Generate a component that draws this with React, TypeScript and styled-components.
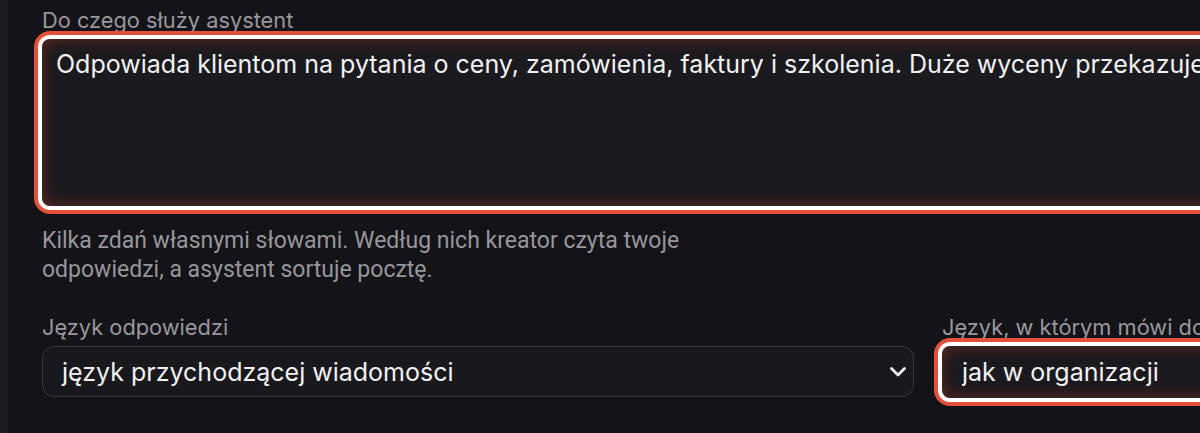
import styled, { createGlobalStyle } from "styled-components";

const GlobalStyle = createGlobalStyle`
    html, body {
        margin: 0;
        padding: 0;
        background: #141317;
        overflow: hidden;
    }
    body {
        font-family: Inter, "Noto Sans", sans-serif;
        -webkit-font-smoothing: antialiased;
    }
`

const Page = styled.div`
    display: flex;
    height: 433px;
    width: 1200px;
    overflow: hidden;
`

const SideStrip = styled.div`
    flex: 0 0 8px;
    background: #1c1b21;
`

const Main = styled.main`
    flex: 1 0 auto;
    padding: 6px 0 0 34px;
    display: flex;
    flex-direction: column;
`

const Form = styled.div`
    width: 1780px;
    display: flex;
    flex-direction: column;
`

const Label = styled.label`
    display: block;
    font-size: 21.8px;
    line-height: 28px;
    color: #98979d;
    margin-bottom: 5px;
    white-space: nowrap;
`

const focusRing = `
    box-shadow: 0 0 0 4px #ffffff, 0 0 0 8px #e2513b, inset 0 0 16px rgba(150, 55, 40, 0.6);
`

const TextArea = styled.textarea`
    display: block;
    box-sizing: border-box;
    width: 100%;
    height: 167px;
    padding: 9px 14px;
    border: none;
    border-radius: 8px;
    background: #1b1a1e;
    color: #f2f2f4;
    font-family: inherit;
    font-size: 25px;
    line-height: 32px;
    resize: none;
    outline: none;
    ${focusRing}
`

const Hint = styled.p`
    margin: 20px 0 0;
    max-width: 690px;
    font-family: Roboto, Inter, sans-serif;
    font-size: 23px;
    line-height: 29px;
    color: #97969c;
`

const Row = styled.div`
    margin-top: 29px;
    display: grid;
    grid-template-columns: 872px 1fr;
    column-gap: 28px;
`

const Field = styled.div`
    display: flex;
    flex-direction: column;
`

const SelectBox = styled.div`
    box-sizing: border-box;
    height: 51px;
    display: flex;
    align-items: center;
    justify-content: space-between;
    padding: 0 6px 0 19px;
    border: 1px solid #39383e;
    border-radius: 12px;
    background: #19181c;
    color: #f2f2f4;
    font-size: 25px;
`

const Chevron = styled.svg`
    flex: 0 0 auto;
    width: 18px;
    height: 12px;
`

const TextInput = styled.input`
    box-sizing: border-box;
    height: 52px;
    width: 100%;
    padding: 0 20px;
    border: none;
    border-radius: 8px;
    background: #1b1a1e;
    color: #f2f2f4;
    font-family: inherit;
    font-size: 25px;
    outline: none;
    ${focusRing}
`

export default function App() {
    return <>
        <GlobalStyle/>
        <Page>
            <SideStrip/>
            <Main>
                <Form>
                    <Label>Do czego służy asystent</Label>
                    <TextArea readOnly
                              defaultValue="Odpowiada klientom na pytania o ceny, zamówienia, faktury i szkolenia. Duże wyceny przekazuje do działu sprzedaży."/>
                    <Hint>Kilka zdań własnymi słowami. Według nich kreator czyta twoje odpowiedzi, a asystent sortuje pocztę.</Hint>
                    <Row>
                        <Field>
                            <Label>Język odpowiedzi</Label>
                            <SelectBox>
                                <span>język przychodzącej wiadomości</span>
                                <Chevron viewBox="0 0 18 12">
                                    <path d="M2.5 2.5 L9 9 L15.5 2.5" fill="none" stroke="#f2f2f4" strokeWidth="2.8"
                                          strokeLinecap="round" strokeLinejoin="round"/>
                                </Chevron>
                            </SelectBox>
                        </Field>
                        <Field>
                            <Label>Język, w którym mówi do ciebie</Label>
                            <TextInput readOnly defaultValue="jak w organizacji"/>
                        </Field>
                    </Row>
                </Form>
            </Main>
        </Page>
    </>
}
